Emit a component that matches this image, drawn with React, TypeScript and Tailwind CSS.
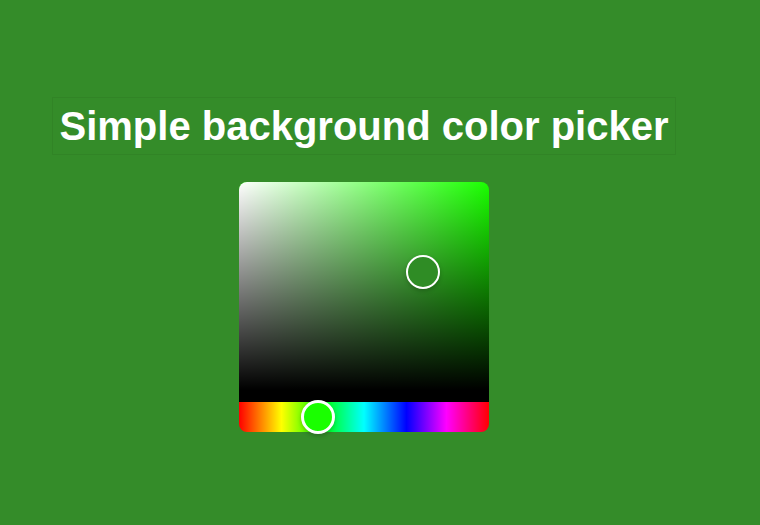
import { useState } from 'react';

function hsvToRgb(h: number, s: number, v: number): string {
  const f = (n: number) => {
    const k = (n + h / 60) % 6;
    return Math.round(255 * (v - v * s * Math.max(0, Math.min(k, 4 - k, 1))));
  };
  return `rgb(${f(5)}, ${f(3)}, ${f(1)})`;
}

export default function App() {
  const [color] = useState({ h: 114, s: 0.736, v: 0.55 });
  const current = hsvToRgb(color.h, color.s, color.v);

  return (
    <div className="min-h-[525px] w-full bg-[#348c29] font-['Liberation_Sans',Arial,sans-serif]">
      <div className="flex w-[728px] flex-col items-center pt-[97px]">
        <h1 className="border border-black/5 px-1.5 py-[5px] text-[40px] font-bold leading-[46px] text-white">
          Simple background color picker
        </h1>
        <ColorPicker hue={color.h} sat={color.s} current={current} />
      </div>
    </div>
  );
}

function ColorPicker({ hue, sat, current }: { hue: number; sat: number; current: string }) {
  const pure = `hsl(${hue}, 100%, 50%)`;

  return (
    <div className="mt-[27px] flex w-[250px] flex-col select-none">
      <div
        className="relative h-[220px] rounded-t-lg border-b-[12px] border-black bg-[linear-gradient(to_top,#000,rgba(0,0,0,0)),linear-gradient(to_right,#fff,rgba(255,255,255,0))]"
        style={{ backgroundColor: pure }}
      >
        <div
          className="absolute h-[34px] w-[34px] -translate-x-1/2 -translate-y-1/2 rounded-full border-[2px] border-white shadow-[0_2px_4px_rgba(0,0,0,0.2)]"
          style={{ left: `${sat * 100}%`, top: '43.5%', backgroundColor: current }}
        />
      </div>
      <div className="relative h-[30px] rounded-b-lg bg-[linear-gradient(to_right,#f00_0%,#ff0_17%,#0f0_33%,#0ff_50%,#00f_67%,#f0f_83%,#f00_100%)]">
        <div
          className="absolute top-1/2 h-[34px] w-[34px] -translate-x-1/2 -translate-y-1/2 rounded-full border-[3px] border-white shadow-[0_2px_4px_rgba(0,0,0,0.2)]"
          style={{ left: `${(hue / 360) * 100}%`, backgroundColor: pure }}
        />
      </div>
    </div>
  );
}
